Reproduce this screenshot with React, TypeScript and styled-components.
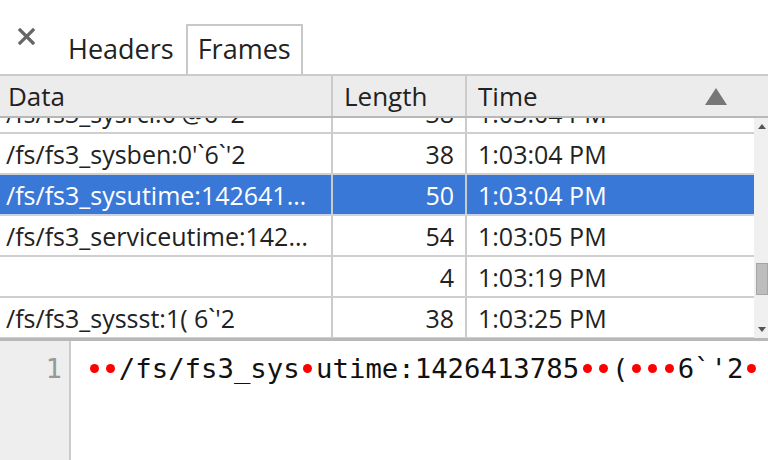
import styled, { createGlobalStyle } from 'styled-components'

const GlobalStyle = createGlobalStyle`
  html, body {
    margin: 0;
    padding: 0;
    background: #fff;
  }
  body {
    font-family: "Open Sans", "Noto Sans", sans-serif;
    color: #222;
  }
`

type Frame = {
  data: string
  length: number
  time: string
  selected?: boolean
}

const frames: Frame[] = [
  { data: "/fs/fs3_sysrcl:0'@6`'2", length: 38, time: '1:03:04 PM' },
  { data: "/fs/fs3_sysben:0'`6`'2", length: 38, time: '1:03:04 PM' },
  { data: "/fs/fs3_sysutime:1426413785(6`'2", length: 50, time: '1:03:04 PM', selected: true },
  { data: '/fs/fs3_serviceutime:1426413786(6`\'2', length: 54, time: '1:03:05 PM' },
  { data: '', length: 4, time: '1:03:19 PM' },
  { data: "/fs/fs3_syssst:1( 6`'2", length: 38, time: '1:03:25 PM' },
]

// "~" marks a non-printable byte, drawn as a red dot
const frameText = "~~/fs/fs3_sys~utime:1426413785~~(~~~6`'2~"

export default function App() {
  return (
    <Page>
      <GlobalStyle />

      {/* Tabs */}
      <TabBar>
        <CloseButton aria-label="Close">
          <svg width="17" height="17" viewBox="0 0 17 17">
            <path d="M2 2 L15 15 M15 2 L2 15" stroke="#666" strokeWidth="3.2" strokeLinecap="square" />
          </svg>
        </CloseButton>
        <Tab>Headers</Tab>
        <Tab $active>Frames</Tab>
      </TabBar>

      {/* Column headers */}
      <HeaderRow>
        <HeaderCell>Data</HeaderCell>
        <HeaderCell>Length</HeaderCell>
        <HeaderCell>
          Time
          <SortArrow width="22" height="17" viewBox="0 0 22 17">
            <polygon points="11,0 22,17 0,17" fill="#777" />
          </SortArrow>
        </HeaderCell>
      </HeaderRow>

      {/* Frame list */}
      <Body>
        <RowViewport>
          <RowList $scroll={25}>
            {frames.map((f, i) => (
              <Row key={i} $selected={f.selected}>
                <DataCell>{f.data}</DataCell>
                <LengthCell>{f.length}</LengthCell>
                <TimeCell>{f.time}</TimeCell>
              </Row>
            ))}
          </RowList>
        </RowViewport>
        <Scrollbar>
          <ScrollArrow>
            <svg width="8" height="5" viewBox="0 0 8 5"><polygon points="4,0 8,5 0,5" fill="#555" /></svg>
          </ScrollArrow>
          <ScrollTrack>
            <ScrollThumb $offset={128} />
          </ScrollTrack>
          <ScrollArrow>
            <svg width="8" height="5" viewBox="0 0 8 5"><polygon points="0,0 8,0 4,5" fill="#555" /></svg>
          </ScrollArrow>
        </Scrollbar>
      </Body>

      {/* Frame payload */}
      <Editor>
        <Gutter>1</Gutter>
        <Code>
          {frameText.split('').map((ch, i) =>
            ch === '~' ? <InvalidChar key={i} title="\u0000" /> : ch
          )}
        </Code>
      </Editor>
    </Page>
  )
}

const Page = styled.div`
  height: 460px;
  overflow: hidden;
  display: flex;
  flex-direction: column;
`

const TabBar = styled.div`
  height: 74px;
  display: flex;
  align-items: flex-end;
  padding-left: 18px;
  box-sizing: border-box;
`

const CloseButton = styled.div`
  align-self: flex-start;
  margin-top: 28px;
  margin-right: 21px;
  width: 17px;
  height: 17px;
  display: flex;
`

const Tab = styled.div<{ $active?: boolean }>`
  height: 50px;
  box-sizing: border-box;
  padding: 0 10px;
  font-size: 27px;
  line-height: 46px;
  color: #222;
  border: 2px solid ${p => (p.$active ? '#c8c8c8' : 'transparent')};
  border-bottom: none;
  background: #fff;
`

const columns = '333px 134px 1fr'

const HeaderRow = styled.div`
  display: grid;
  grid-template-columns: ${columns};
  height: 44px;
  box-sizing: border-box;
  background: #ececec;
  border-top: 2px solid #cbcbcb;
  border-bottom: 2px solid #b8b8b8;
`

const HeaderCell = styled.div`
  display: flex;
  align-items: center;
  padding-left: 8px;
  font-size: 26px;
  line-height: 40px;
  color: #222;
  border-right: 2px solid #cbcbcb;

  & + & {
    padding-left: 11px;
  }

  &:last-child {
    border-right: none;
  }
`

const SortArrow = styled.svg`
  margin-left: auto;
  margin-right: 41px;
`

const Body = styled.div`
  height: 223px;
  box-sizing: border-box;
  display: flex;
  border-bottom: 3px solid #b8b8b8;
`

const RowViewport = styled.div`
  flex: 1;
  overflow: hidden;
`

const RowList = styled.div<{ $scroll: number }>`
  margin-top: -${p => p.$scroll}px;
`

const Row = styled.div<{ $selected?: boolean }>`
  display: grid;
  grid-template-columns: ${columns};
  height: 41px;
  box-sizing: border-box;
  border-bottom: 2px solid ${p => (p.$selected ? '#c9d3e3' : '#cfcfcf')};
  background: ${p => (p.$selected ? '#3a78d8' : '#fff')};
  color: ${p => (p.$selected ? '#fff' : '#222')};
  font-size: 25px;
  line-height: 37px;
  padding-top: 2px;
`

const Cell = styled.div`
  white-space: nowrap;
  overflow: hidden;
  text-overflow: ellipsis;
  border-right: 2px solid #cbcbcb;
  margin-top: -2px;
  padding-top: 2px;
`

const DataCell = styled(Cell)`
  padding-left: 6px;
  padding-right: 18px;
`

const LengthCell = styled(Cell)`
  text-align: right;
  padding-right: 11px;
`

const TimeCell = styled(Cell)`
  padding-left: 11px;
  border-right: none;
`

const Scrollbar = styled.div`
  width: 14px;
  background: #f0f0f0;
  display: flex;
  flex-direction: column;
`

const ScrollArrow = styled.div`
  height: 17px;
  display: flex;
  align-items: center;
  justify-content: center;
  padding-left: 2px;
`

const ScrollTrack = styled.div`
  flex: 1;
`

const ScrollThumb = styled.div<{ $offset: number }>`
  margin-top: ${p => p.$offset}px;
  margin-left: 2px;
  width: 12px;
  height: 32px;
  box-sizing: border-box;
  background: #bdbdbd;
  border: 1px solid #a6a6a6;
`

const Editor = styled.div`
  flex: 1;
  display: flex;
  font-family: "DejaVu Sans Mono", "Liberation Mono", monospace;
  font-size: 27.3px;
  line-height: 36px;
`

const Gutter = styled.div`
  width: 71px;
  box-sizing: border-box;
  background: #eeeeee;
  border-right: 2px solid #cbcbcb;
  color: #999;
  text-align: right;
  padding: 10px 7px 0 0;
`

const Code = styled.div`
  flex: 1;
  padding: 10px 0 0 15px;
  white-space: pre;
  color: #111;
`

const InvalidChar = styled.span`
  display: inline-block;
  width: 1ch;
  text-align: center;

  &::before {
    content: '';
    display: inline-block;
    width: 9px;
    height: 9px;
    border-radius: 50%;
    background: #f00;
    vertical-align: 5px;
  }
`
